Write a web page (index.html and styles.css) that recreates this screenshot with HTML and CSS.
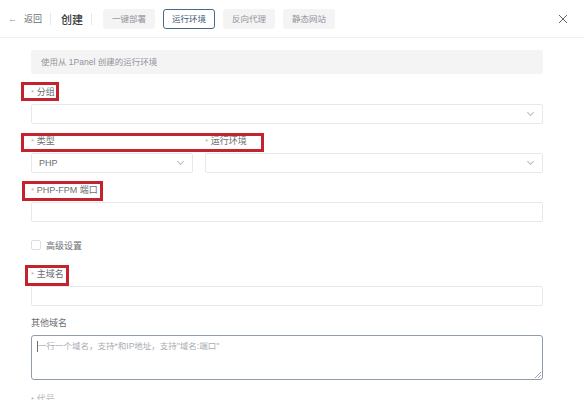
FILE: index.html
```html
<!DOCTYPE html>
<html lang="zh">
<head>
<meta charset="utf-8">
<link rel="stylesheet" href="styles.css">
</head>
<body>
<div class="page">
  <header class="top">
    <span class="back"><span class="arrow">←</span>返回</span>
    <span class="divider"></span>
    <span class="title">创建</span>
    <span class="divider"></span>
    <div class="tabs">
      <span class="tab">一键部署</span>
      <span class="tab active">运行环境</span>
      <span class="tab">反向代理</span>
      <span class="tab">静态网站</span>
    </div>
    <span class="close">
      <svg width="10" height="10" viewBox="0 0 10 10"><path d="M1 1L9 9M9 1L1 9" stroke="#606266" stroke-width="1" fill="none"/></svg>
    </span>
  </header>
  <main class="body">
    <div class="form">
      <div class="alert">使用从 1Panel 创建的运行环境</div>

      <div class="item first">
        <div class="label mark m1"><span class="req">*</span> 分组</div>
        <div class="select"><span class="val"></span><span class="chev"></span></div>
      </div>

      <div class="row item">
        <div class="col">
          <div class="label mark m2"><span class="req">*</span> 类型</div>
          <div class="select"><span class="val">PHP</span><span class="chev"></span></div>
        </div>
        <div class="col">
          <div class="label"><span class="req">*</span> 运行环境</div>
          <div class="select"><span class="val"></span><span class="chev"></span></div>
        </div>
      </div>

      <div class="item">
        <div class="label mark m3"><span class="req">*</span> PHP-FPM 端口</div>
        <div class="input"></div>
      </div>

      <div class="check-row">
        <span class="box"></span><span class="check-label">高级设置</span>
      </div>

      <div class="item">
        <div class="label mark m4"><span class="req">*</span> 主域名</div>
        <div class="input"></div>
      </div>

      <div class="item">
        <div class="label">其他域名</div>
        <div class="textarea"><span class="caret"></span><span class="ph">一行一个域名，支持*和IP地址，支持"域名:端口"</span><span class="grip"></span></div>
      </div>

      <div class="item last">
        <div class="label faint"><span class="req">*</span> 代号</div>
        <div class="input"></div>
      </div>
    </div>
  </main>
</div>
</body>
</html>
```
FILE: styles.css
```css
html, body {
  margin: 0;
  padding: 0;
  background: #ffffff;
}
body {
  font-family: "Liberation Sans", "Noto Sans CJK SC", sans-serif;
  font-size: 9px;
  color: #6b6e73;
  width: 584px;
  height: 400px;
  overflow: hidden;
}
.page {
  display: flex;
  flex-direction: column;
  height: 400px;
}
.top {
  height: 37px;
  flex: none;
  display: flex;
  align-items: center;
  padding-left: 8px;
  border-bottom: 1px solid #eef0f3;
}
.back {
  font-size: 9px;
  color: #6b6e73;
  display: flex;
  align-items: center;
}
.arrow {
  margin-right: 7px;
  color: #909399;
}
.divider {
  width: 1px;
  height: 12px;
  background: #e4e7ed;
  margin: 0 10px 0 8px;
}
.title {
  font-size: 11px;
  color: #3a3c40;
  font-weight: 500;
}
.tabs {
  display: flex;
  gap: 8px;
  margin-left: 1px;
}
.tab {
  height: 18px;
  line-height: 18px;
  padding: 0 8px;
  border: 1px solid transparent;
  border-radius: 3px;
  background: #f4f4f5;
  color: #909399;
  font-size: 8.5px;
}
.tab.active {
  background: #ffffff;
  border-color: #4a6784;
  color: #3d5a78;
}
.close {
  margin-left: auto;
  margin-right: 16px;
  display: flex;
  align-items: center;
}
.body {
  flex: 1;
  overflow-y: scroll;
}
.body::-webkit-scrollbar {
  width: 5px;
}
.body::-webkit-scrollbar-track {
  background: #f4f4f5;
}
.body::-webkit-scrollbar-thumb {
  background: #dedfe1;
  border-radius: 3px;
}
.form {
  padding: 12px 0 40px 31px;
  width: 512px;
}
.alert {
  height: 24px;
  line-height: 24px;
  background: #f4f4f5;
  padding-left: 10px;
  color: #909399;
  font-size: 8.5px;
  border-radius: 2px;
}
.item {
  margin-top: 7px;
}
.item.first {
  margin-top: 8px;
}
.item.last {
  margin-top: 9px;
}
.label {
  height: 20px;
  line-height: 20px;
  margin-bottom: 2px;
  color: #6b6e73;
  font-size: 9px;
  position: relative;
}
.label.faint {
  color: #b4b7bc;
}
.req {
  color: #b0b3b8;
  font-size: 8px;
}
.mark::after {
  content: "";
  position: absolute;
  border: 3px solid #c3232c;
  box-sizing: border-box;
  pointer-events: none;
}
.m1::after { left: -10px; top: 0; width: 38px; height: 19px; }
.m2::after { left: -10px; top: 2px; width: 243px; height: 19px; }
.m3::after { left: -9px; top: 1px; width: 81px; height: 20px; }
.m4::after { left: -6px; top: 1px; width: 44px; height: 21px; }
.select, .input {
  height: 20px;
  box-sizing: border-box;
  border: 1px solid #e6e8ec;
  border-radius: 2px;
  display: flex;
  align-items: center;
  padding: 0 7px;
}
.val {
  flex: 1;
  color: #6b6e73;
  font-size: 9px;
}
.chev {
  width: 4px;
  height: 4px;
  border-right: 1px solid #b8bbc0;
  border-bottom: 1px solid #b8bbc0;
  transform: rotate(45deg);
  margin-top: -3px;
  margin-right: 2px;
}
.row {
  display: grid;
  grid-template-columns: 162px 1fr;
  column-gap: 12px;
}
.check-row {
  height: 24px;
  margin-top: 11px;
  display: flex;
  align-items: center;
}
.box {
  width: 8px;
  height: 8px;
  border: 1px solid #dcdfe6;
  border-radius: 2px;
  margin-right: 5px;
}
.check-label {
  color: #6b6e73;
  font-size: 9px;
}
.textarea {
  height: 45px;
  box-sizing: border-box;
  border: 1px solid #8e9cab;
  border-radius: 3px;
  padding: 5px 5px;
  display: flex;
  align-items: flex-start;
  position: relative;
}
.caret {
  width: 1px;
  height: 11px;
  background: #6b6e73;
}
.ph {
  color: #a8abb2;
  font-size: 8.5px;
  line-height: 11px;
}
.grip {
  position: absolute;
  right: 1px;
  bottom: 1px;
  width: 6px;
  height: 6px;
  background: linear-gradient(135deg, transparent 45%, #9aa3ad 45%, #9aa3ad 55%, transparent 55%, transparent 70%, #9aa3ad 70%, #9aa3ad 80%, transparent 80%);
}
```
